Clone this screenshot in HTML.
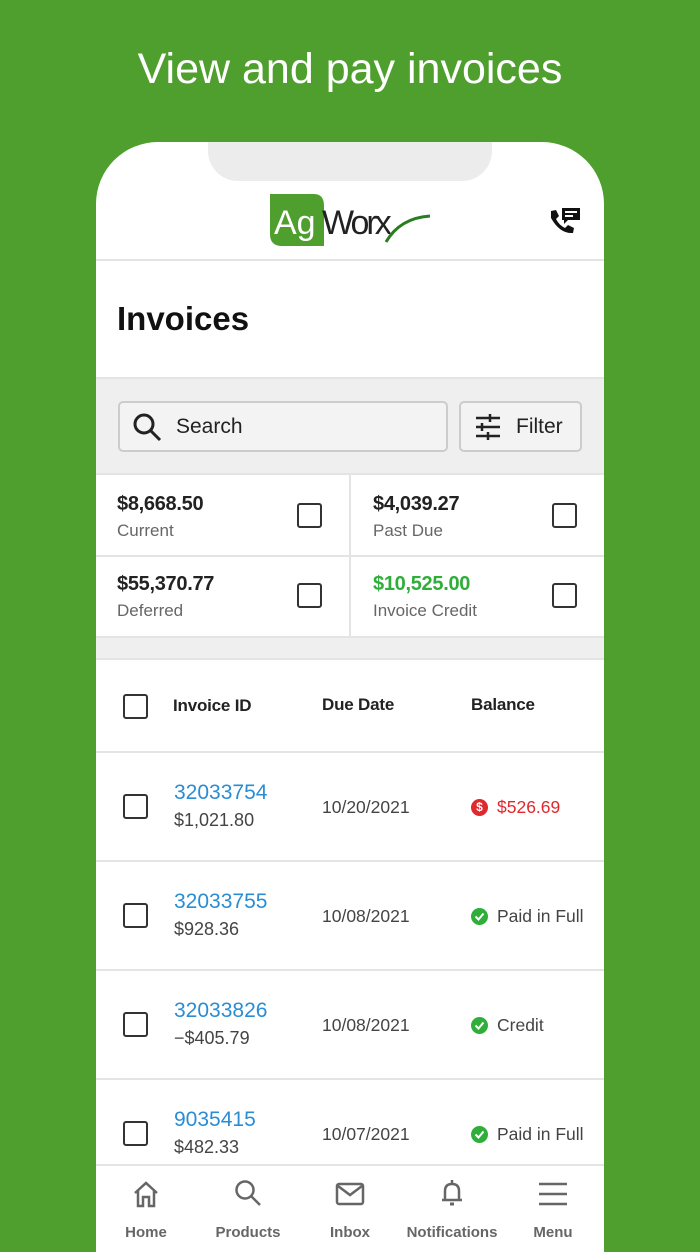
<!DOCTYPE html>
<html><head><meta charset="utf-8"><style>
*{margin:0;padding:0;box-sizing:border-box}
body{width:700px;height:1244px;background:#4e9f2d;font-family:"Liberation Sans",sans-serif;position:relative;overflow:hidden}
.title{position:absolute;top:45px;left:0;width:700px;text-align:center;color:#fff;font-size:43px}
.phone{position:absolute;left:96px;top:142px;width:508px;height:1110px;background:#fff;border-radius:62px 62px 0 0;overflow:hidden}
.notch{position:absolute;left:112px;top:0;width:284px;height:39px;background:#ececec;border-radius:0 0 30px 30px}
.abs{position:absolute}
.hr{position:absolute;left:0;width:508px;height:2px;background:#e4e4e4}
.gray{position:absolute;left:0;width:508px;background:#efefef}
.box{position:absolute;width:25px;height:25px;border:2.5px solid #333;border-radius:3px}
.amt{font-size:20px;font-weight:bold;color:#222;letter-spacing:-0.3px}
.lbl{font-size:17px;color:#666}
.id{font-size:21px;color:#2a8dd4}
.sub{font-size:18px;color:#444}
.date{font-size:17.5px;color:#444}
.hd{font-size:17px;font-weight:bold;color:#222;letter-spacing:-0.2px}
.nav{position:absolute;top:1022px;left:0;width:508px;height:88px;background:#fff;border-top:2px solid #e4e4e4}
.nav div{position:absolute;top:58px;font-size:15px;color:#666;font-weight:bold;transform:translateX(-50%)}
</style></head><body>
<div class="title">View and pay invoices</div>
<div class="phone">
<div class="notch"></div>
<svg class="abs" style="left:174px;top:50px" width="162" height="56" viewBox="0 0 162 56">
<path d="M0 2 H44 Q54 2 54 14 V54 H12 Q0 54 0 42 Z" fill="#4e9f2d"/>
<text x="4" y="42" font-family="Liberation Sans" font-size="34" fill="#fff">Ag</text>
<text x="52" y="42" font-family="Liberation Sans" font-size="34" fill="#222" letter-spacing="-3">Worx</text>
<path d="M116 50 Q130 26 160 24" stroke="#2a7d1e" stroke-width="3" fill="none"/>
</svg>
<svg class="abs" style="left:452px;top:64px" width="34" height="30" viewBox="0 0 34 30">
<path d="M3 5 L8 4 L11 10 L8 13 Q11 19 17 22 L20 19 L26 22 L25 27 Q12 28 3 12 Z" fill="#111"/>
<rect x="14" y="2" width="18" height="12" fill="#111"/><rect x="17" y="5" width="12" height="2" fill="#fff"/><rect x="17" y="9" width="8" height="2" fill="#fff"/><path d="M16 14 L16 18 L20 14Z" fill="#111"/>
</svg>
<div class="hr" style="top:117px"></div>
<div class="abs" style="left:21px;top:158px;font-size:33px;font-weight:bold;color:#111">Invoices</div>
<div class="gray" style="top:235px;height:98px;border-top:2px solid #e4e4e4;border-bottom:2px solid #e4e4e4"></div>
<div class="abs" style="left:22px;top:259px;width:330px;height:51px;border:2px solid #ccc;border-radius:5px;background:#f3f3f3"></div>
<svg class="abs" style="left:36px;top:270px" width="30" height="30" viewBox="0 0 30 30"><circle cx="12" cy="12" r="9" stroke="#222" stroke-width="3" fill="none"/><path d="M19 19 L28 28" stroke="#222" stroke-width="3"/></svg>
<div class="abs" style="left:80px;top:273px;font-size:21px;color:#222">Search</div>
<div class="abs" style="left:363px;top:259px;width:123px;height:51px;border:2px solid #ccc;border-radius:5px;background:#f3f3f3"></div>
<svg class="abs" style="left:378px;top:271px" width="28" height="28" viewBox="0 0 28 28" stroke="#222" stroke-width="2.5"><path d="M2 5H26M2 14H26M2 23H26" /><path d="M16 1V9M8 10V18M14 19V27"/></svg>
<div class="abs" style="left:420px;top:273px;font-size:21px;color:#222">Filter</div>
<div class="abs" style="left:253px;top:333px;width:2px;height:162px;background:#e4e4e4"></div>
<div class="hr" style="top:413px"></div>
<div class="abs amt" style="left:21px;top:351px">$8,668.50</div><div class="abs lbl" style="left:21px;top:379px">Current</div>
<div class="box" style="left:201px;top:361px"></div>
<div class="abs amt" style="left:277px;top:351px">$4,039.27</div><div class="abs lbl" style="left:277px;top:379px">Past Due</div>
<div class="box" style="left:456px;top:361px"></div>
<div class="abs amt" style="left:21px;top:431px">$55,370.77</div><div class="abs lbl" style="left:21px;top:459px">Deferred</div>
<div class="box" style="left:201px;top:441px"></div>
<div class="abs amt" style="left:277px;top:431px;color:#2fae3a">$10,525.00</div><div class="abs lbl" style="left:277px;top:459px">Invoice Credit</div>
<div class="box" style="left:456px;top:441px"></div>
<div class="gray" style="top:494px;height:24px;border-top:2px solid #e4e4e4;border-bottom:2px solid #e4e4e4"></div>
<div class="box" style="left:27px;top:552px"></div>
<div class="abs hd" style="left:77px;top:554px">Invoice ID</div>
<div class="abs hd" style="left:226px;top:553px">Due Date</div>
<div class="abs hd" style="left:375px;top:553px">Balance</div>
<div class="hr" style="top:609px"></div>
<div class="box" style="left:27px;top:652px"></div>
<div class="abs id" style="left:78px;top:639px">32033754</div><div class="abs sub" style="left:78px;top:668px">$1,021.80</div>
<div class="abs date" style="left:226px;top:655px">10/20/2021</div>
<div class="abs" style="left:375px;top:657px;width:17px;height:17px;border-radius:50%;background:#e0282d;color:#fff;font-size:12px;font-weight:bold;text-align:center;line-height:17px">$</div>
<div class="abs date" style="left:401px;top:655px;color:#e0282d">$526.69</div>
<div class="hr" style="top:718px"></div>
<div class="box" style="left:27px;top:761px"></div>
<div class="abs id" style="left:78px;top:748px">32033755</div><div class="abs sub" style="left:78px;top:777px">$928.36</div>
<div class="abs date" style="left:226px;top:764px">10/08/2021</div>
<svg class="abs" style="left:375px;top:766px" width="17" height="17" viewBox="0 0 17 17"><circle cx="8.5" cy="8.5" r="8.5" fill="#2fae3a"/><path d="M4.5 8.5L7.5 11.5L12.5 5.5" stroke="#fff" stroke-width="2" fill="none"/></svg>
<div class="abs date" style="left:401px;top:764px">Paid in Full</div>
<div class="hr" style="top:827px"></div>
<div class="box" style="left:27px;top:870px"></div>
<div class="abs id" style="left:78px;top:857px">32033826</div><div class="abs sub" style="left:78px;top:886px">&minus;$405.79</div>
<div class="abs date" style="left:226px;top:873px">10/08/2021</div>
<svg class="abs" style="left:375px;top:875px" width="17" height="17" viewBox="0 0 17 17"><circle cx="8.5" cy="8.5" r="8.5" fill="#2fae3a"/><path d="M4.5 8.5L7.5 11.5L12.5 5.5" stroke="#fff" stroke-width="2" fill="none"/></svg>
<div class="abs date" style="left:401px;top:873px">Credit</div>
<div class="hr" style="top:936px"></div>
<div class="box" style="left:27px;top:979px"></div>
<div class="abs id" style="left:78px;top:966px">9035415</div><div class="abs sub" style="left:78px;top:995px">$482.33</div>
<div class="abs date" style="left:226px;top:982px">10/07/2021</div>
<svg class="abs" style="left:375px;top:984px" width="17" height="17" viewBox="0 0 17 17"><circle cx="8.5" cy="8.5" r="8.5" fill="#2fae3a"/><path d="M4.5 8.5L7.5 11.5L12.5 5.5" stroke="#fff" stroke-width="2" fill="none"/></svg>
<div class="abs date" style="left:401px;top:982px">Paid in Full</div>
<div class="nav">
<svg class="abs" style="left:36px;top:14px" width="28" height="28" viewBox="0 0 28 28" fill="none" stroke="#666" stroke-width="2.5"><path d="M3 13L14 3L25 13M6 10V26H11V17H17V26H22V10"/></svg>
<svg class="abs" style="left:137px;top:12px" width="30" height="30" viewBox="0 0 30 30" fill="none" stroke="#666" stroke-width="2.5"><circle cx="12" cy="12" r="8.5"/><path d="M18 18L27 27"/></svg>
<svg class="abs" style="left:239px;top:16px" width="30" height="24" viewBox="0 0 30 24" fill="none" stroke="#666" stroke-width="2.5"><rect x="2" y="2" width="26" height="20" rx="2"/><path d="M3 4L15 13L27 4"/></svg>
<svg class="abs" style="left:343px;top:12px" width="26" height="30" viewBox="0 0 26 30" fill="none" stroke="#666" stroke-width="2.5"><path d="M13 2V5M6 22V13Q6 6 13 6Q20 6 20 13V22M3 22H23"/><path d="M11 26H15" stroke-width="3"/></svg>
<svg class="abs" style="left:442px;top:15px" width="30" height="26" viewBox="0 0 30 26" stroke="#666" stroke-width="2.5"><path d="M1 3H29M1 13H29M1 23H29"/></svg>
<div style="left:50px">Home</div><div style="left:152px">Products</div><div style="left:254px">Inbox</div><div style="left:356px">Notifications</div><div style="left:457px">Menu</div>
</div>
</div>
</body></html>
